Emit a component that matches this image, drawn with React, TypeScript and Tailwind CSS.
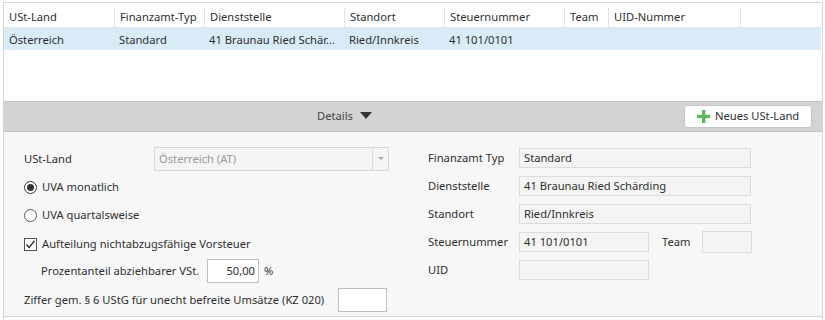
import React from "react";

const font = { fontFamily: '"Noto Sans", "Segoe UI", sans-serif' };

const cols = [
  { label: "USt-Land", w: "w-[110px]", v: "Österreich" },
  { label: "Finanzamt-Typ", w: "w-[90px]", v: "Standard" },
  { label: "Dienststelle", w: "w-[140px]", v: "41 Braunau Ried Schär..." },
  { label: "Standort", w: "w-[100px]", v: "Ried/Innkreis" },
  { label: "Steuernummer", w: "w-[120px]", v: "41 101/0101" },
  { label: "Team", w: "w-[44px]", v: "" },
  { label: "UID-Nummer", w: "w-[132px]", v: "" },
];

function Field({ w, value, h = "h-[20px]" }: { w: string; value?: string; h?: string }) {
  return (
    <div className={`${w} ${h} border border-[#dcdcdc] bg-[#f4f4f4] px-[4px] flex items-center whitespace-nowrap text-[#2f2f2f]`}>
      {value}
    </div>
  );
}

export default function App() {
  return (
    <div className="w-[825px] h-[320px] bg-white pt-[2px] pl-[3px] pr-[2px] overflow-hidden text-[#2f2f2f] text-[11.2px]" style={font}>
      <div className="h-[318px] border-l border-t border-r border-[#d6d6d6] flex flex-col">
        {/* table */}
        <div className="h-[98px] bg-white">
          <div className="flex h-[25px] border-b border-[#e3e3e3] pt-[4px]">
            {cols.map((c, i) => (
              <div key={i} className={`${c.w} ${i === 0 ? "" : "border-l border-[#e3e3e3]"} px-[5px] flex items-center whitespace-nowrap`}>
                {c.label}
              </div>
            ))}
            <div className="flex-1 border-l border-[#e3e3e3]" />
          </div>
          <div className="flex h-[22px] bg-[#d9ebf7] mr-[1px] pt-[2px]">
            {cols.map((c, i) => (
              <div key={i} className={`${c.w} px-[5px] flex items-center whitespace-nowrap overflow-hidden`}>
                {c.v}
              </div>
            ))}
          </div>
        </div>
        {/* details bar */}
        <div className="h-[31px] bg-[#d3d3d3] border-t border-b border-[#c4c4c4] flex items-center relative">
          <div className="absolute left-[313px] top-[6px] flex items-center gap-[7px] text-[#444]">
            <span>Details</span>
            <svg width="12" height="8" viewBox="0 0 12 8"><path d="M0 0 L12 0 L6 7 Z" fill="#333" /></svg>
          </div>
          <div className="ml-auto mr-[10px] w-[128px] h-[23px] bg-white border border-[#c8c8c8] rounded-[3px] flex items-center pl-[12px] gap-[5px] whitespace-nowrap">
            <svg width="13" height="13" viewBox="0 0 13 13">
              <rect x="5" y="0" width="3.4" height="13" fill="#5cb85c" />
              <rect x="0" y="4.8" width="13" height="3.4" fill="#5cb85c" />
            </svg>
            <span>Neues USt-Land</span>
          </div>
        </div>
        {/* details panel */}
        <div className="flex-1 bg-[#f7f7f7] border-b border-[#d6d6d6] flex whitespace-nowrap">
          <div className="w-[424px] pl-[20px] pt-[15px]">
            <div className="flex items-center h-[24px]">
              <span className="w-[130px]">USt-Land</span>
              <div className="w-[235px] h-[24px] border border-[#d8d8d8] bg-[#f4f4f4] flex items-center">
                <span className="flex-1 px-[4px] text-[#9a9a9a]">Österreich (AT)</span>
                <div className="w-[16px] h-full border-l border-[#dcdcdc] flex items-center justify-center">
                  <svg width="6" height="4" viewBox="0 0 6 4"><path d="M0 0 L6 0 L3 3 Z" fill="#aaa" /></svg>
                </div>
              </div>
            </div>
            <div className="flex items-center h-[20px] mt-[6px] gap-[5px]">
              <div className="w-[13px] h-[13px] rounded-full border border-[#333] bg-white flex items-center justify-center">
                <div className="w-[7px] h-[7px] rounded-full bg-[#333]" />
              </div>
              <span>UVA monatlich</span>
            </div>
            <div className="flex items-center h-[20px] mt-[8px] gap-[5px]">
              <div className="w-[13px] h-[13px] rounded-full border border-[#555] bg-white" />
              <span>UVA quartalsweise</span>
            </div>
            <div className="flex items-center h-[20px] mt-[9px] gap-[5px]">
              <div className="w-[13px] h-[13px] border border-[#555] bg-white flex items-center justify-center">
                <svg width="11" height="11" viewBox="0 0 11 11"><path d="M1.5 5.5 L4.2 8.5 L9.5 1.8" stroke="#333" strokeWidth="1.4" fill="none" /></svg>
              </div>
              <span>Aufteilung nichtabzugsfähige Vorsteuer</span>
            </div>
            <div className="flex items-center h-[24px] mt-[5px] pl-[17px]">
              <span className="w-[166px]">Prozentanteil abziehbarer VSt.</span>
              <div className="w-[52px] h-[24px] border border-[#bdbdbd] bg-white flex items-center justify-end pr-[3px]">50,00</div>
              <span className="ml-[5px]">%</span>
            </div>
            <div className="flex items-center h-[24px] mt-[5px]">
              <span className="w-[314px]">Ziffer gem. § 6 UStG für unecht befreite Umsätze (KZ 020)</span>
              <div className="w-[49px] h-[24px] border border-[#bdbdbd] bg-white" />
            </div>
          </div>
          <div className="flex-1 pt-[16px]">
            <div className="flex items-center h-[20px]">
              <span className="w-[91px]">Finanzamt Typ</span>
              <Field w="w-[232px]" value="Standard" />
            </div>
            <div className="flex items-center h-[20px] mt-[8px]">
              <span className="w-[91px]">Dienststelle</span>
              <Field w="w-[232px]" value="41 Braunau Ried Schärding" />
            </div>
            <div className="flex items-center h-[20px] mt-[8px]">
              <span className="w-[91px]">Standort</span>
              <Field w="w-[232px]" value="Ried/Innkreis" />
            </div>
            <div className="flex items-center h-[22px] mt-[7px]">
              <span className="w-[91px]">Steuernummer</span>
              <Field w="w-[130px]" value="41 101/0101" />
              <span className="ml-[13px] w-[40px]">Team</span>
              <Field w="w-[50px]" h="h-[22px]" />
            </div>
            <div className="flex items-center h-[20px] mt-[7px]">
              <span className="w-[91px]">UID</span>
              <Field w="w-[130px]" />
            </div>
          </div>
        </div>
        <div className="h-[3px] bg-white" />
      </div>
    </div>
  );
}
